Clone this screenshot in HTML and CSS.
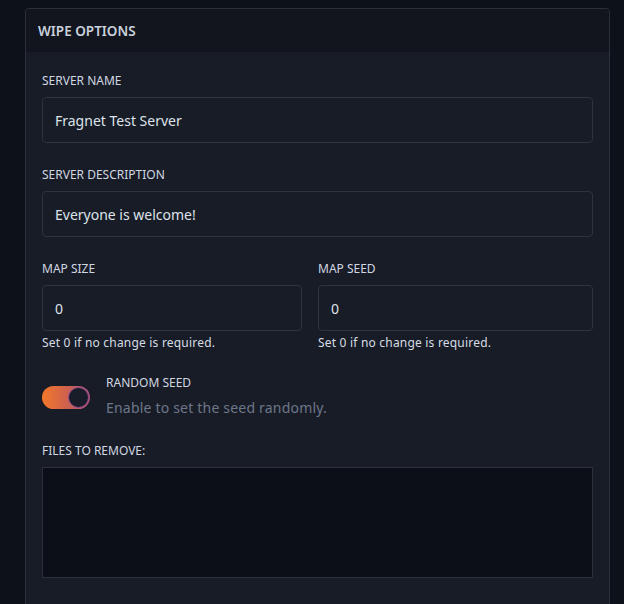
FILE: index.html
```html
<!DOCTYPE html>
<html>
<head>
<meta charset="utf-8">
<link rel="stylesheet" href="styles.css">
</head>
<body>
<div class="page">
  <div class="card">
    <div class="card-header">WIPE OPTIONS</div>
    <div class="card-body">
      <div class="field">
        <label class="label">SERVER NAME</label>
        <div class="input">Fragnet Test Server</div>
      </div>
      <div class="field">
        <label class="label">SERVER DESCRIPTION</label>
        <div class="input">Everyone is welcome!</div>
      </div>
      <div class="row">
        <div class="col">
          <label class="label">MAP SIZE</label>
          <div class="input">0</div>
          <div class="help">Set 0 if no change is required.</div>
        </div>
        <div class="col">
          <label class="label">MAP SEED</label>
          <div class="input">0</div>
          <div class="help">Set 0 if no change is required.</div>
        </div>
      </div>
      <div class="switch-row">
        <div class="switch"><span class="knob"></span></div>
        <div class="switch-text">
          <div class="switch-label">RANDOM SEED</div>
          <div class="switch-desc">Enable to set the seed randomly.</div>
        </div>
      </div>
      <div class="field">
        <label class="label files">FILES TO REMOVE:</label>
        <div class="textarea"></div>
      </div>
    </div>
  </div>
</div>
</body>
</html>
```
FILE: styles.css
```css
* { box-sizing: border-box; }
html, body { margin: 0; padding: 0; }
body {
  background: #0d111a;
  font-family: "Noto Sans", "Open Sans", sans-serif;
  color: #d3d9e2;
  width: 624px;
  height: 604px;
  overflow: hidden;
}
.page {
  padding: 8px 14px 0 25px;
}
.card {
  width: 585px;
  border: 1px solid #2b2f37;
  border-radius: 4px 4px 0 0;
  background: #181c27;
  height: 620px;
  overflow: hidden;
}
.card-header {
  height: 43px;
  background: #12151e;
  padding-left: 12px;
  display: flex;
  align-items: center;
  font-size: 13.5px;
  font-weight: 600;
  color: #c9d1dc;
  letter-spacing: 0;
}
.card-body {
  padding: 20px 16px 16px 16px;
}
.field { margin-bottom: 23px; }
.label {
  display: block;
  font-size: 12px;
  line-height: 16px;
  color: #d0d7e1;
  padding-top: 1px;
  margin-bottom: 8px;
}
.input {
  height: 46px;
  border: 1px solid #2f333b;
  border-radius: 4px;
  padding: 0 12px;
  display: flex;
  align-items: center;
  font-size: 14px;
  color: #dde3ea;
  background: #181c27;
}
.row {
  display: grid;
  grid-template-columns: 260px 1fr;
  gap: 16px;
}
.help {
  font-size: 12px;
  line-height: 16px;
  margin-top: 4px;
  color: #d6dce4;
  letter-spacing: 0.2px;
}
.switch-row {
  display: flex;
  align-items: flex-start;
  gap: 16px;
  margin-top: 24px;
  margin-bottom: 25px;
}
.switch {
  margin-top: 11px;
  width: 48px;
  height: 23px;
  border-radius: 12px;
  background: linear-gradient(90deg, #f3782a 0%, #d46448 45%, #a5517f 100%);
  position: relative;
  flex: none;
}
.knob {
  position: absolute;
  right: 1px;
  top: 1px;
  width: 21px;
  height: 21px;
  border-radius: 50%;
  background: #191d29;
  border: 1px solid #9b4d8c;
}
.switch-label {
  font-size: 12px;
  line-height: 16px;
  color: #d0d7e1;
}
.switch-desc {
  margin-top: 8px;
  font-size: 14px;
  line-height: 18px;
  color: #6d7787;
  letter-spacing: 0.2px;
}
.textarea {
  height: 111px;
  border: 1px solid #2c3038;
  background: #0c0f18;
}
```
